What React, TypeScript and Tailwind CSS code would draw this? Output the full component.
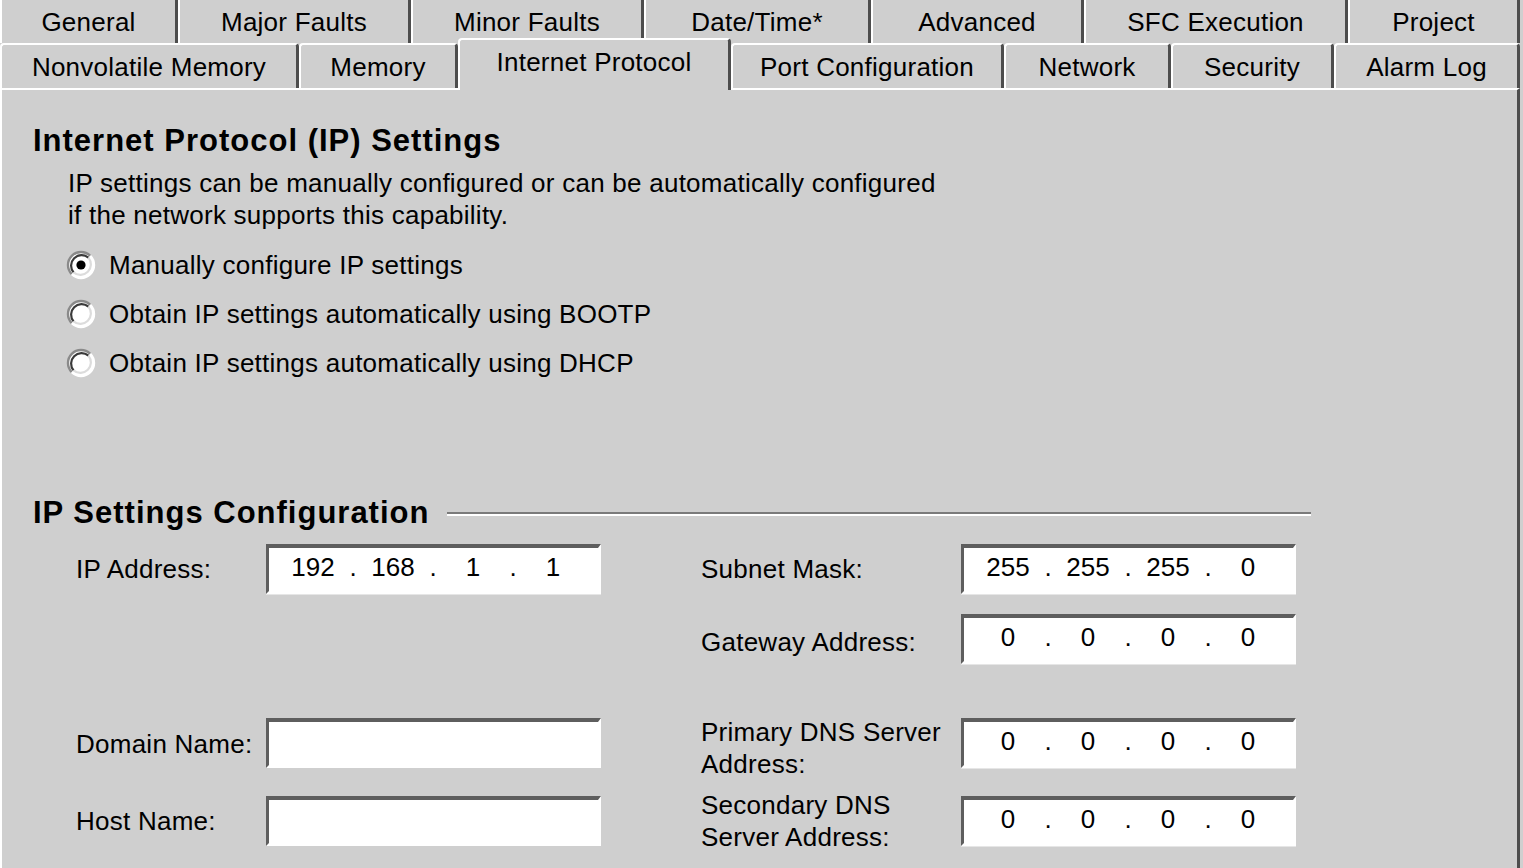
import React from "react";

const row1 = [
  { label: "General", w: "w-[178px]" },
  { label: "Major Faults", w: "w-[233px]" },
  { label: "Minor Faults", w: "w-[233px]" },
  { label: "Date/Time*", w: "w-[227px]" },
  { label: "Advanced", w: "w-[213px]" },
  { label: "SFC Execution", w: "w-[264px]" },
  { label: "Project", w: "w-[172px]" },
];

const row2 = [
  { label: "Nonvolatile Memory", w: "w-[299px]" },
  { label: "Memory", w: "w-[159px]" },
  { label: "Internet Protocol", w: "w-[273px]", sel: true },
  { label: "Port Configuration", w: "w-[273px]" },
  { label: "Network", w: "w-[167px]" },
  { label: "Security", w: "w-[163px]" },
  { label: "Alarm Log", w: "w-[186px]" },
];

function Radio({ checked }: { checked?: boolean }) {
  return (
    <svg width="30" height="30" viewBox="0 0 30 30" className="shrink-0">
      <circle cx="15" cy="15" r="13" fill="#ffffff" />
      <path d="M 5.8 24.2 A 13 13 0 0 1 24.2 5.8" fill="none" stroke="#8a8a8a" strokeWidth="2.4" />
      <path d="M 7.6 22.4 A 10.5 10.5 0 0 1 22.4 7.6" fill="none" stroke="#3a3a3a" strokeWidth="2.2" />
      <path d="M 24.2 5.8 A 13 13 0 0 1 5.8 24.2" fill="none" stroke="#ffffff" strokeWidth="2.4" />
      <path d="M 22.4 7.6 A 10.5 10.5 0 0 1 7.6 22.4" fill="none" stroke="#dcdcdc" strokeWidth="2.2" />
      {checked && <circle cx="15" cy="15" r="4.6" fill="#000000" />}
    </svg>
  );
}

function IpBox({ octets }: { octets: string[] }) {
  return (
    <div className="w-[335px] h-[50px] bg-white border-t-[4px] border-l-[3px] border-b-[3px] border-r-[3px] border-t-[#5e5e5e] border-l-[#5e5e5e] border-b-white border-r-white shadow-[0_1px_0_#e6e6e6] flex items-center pl-[10px] pb-[5px] tracking-normal">
      {octets.map((o, i) => (
        <React.Fragment key={i}>
          {i > 0 && <span className="w-[12px] text-center">.</span>}
          <span className="w-[68px] text-center">{o}</span>
        </React.Fragment>
      ))}
    </div>
  );
}

function TextBox() {
  return (
    <div className="w-[335px] h-[50px] bg-white border-t-[4px] border-l-[3px] border-b-[3px] border-r-[3px] border-t-[#5e5e5e] border-l-[#5e5e5e] border-b-white border-r-white" />
  );
}

export default function App() {
  return (
    <div className="w-[1523px] h-[868px] overflow-hidden bg-[#cfcfcf] text-black text-[26px] leading-[32px] tracking-[0.25px] font-['Liberation_Sans',Arial,sans-serif] flex flex-col">
      {/* Tab row 1 */}
      <div className="flex h-[43px]">
        {row1.map((t) => (
          <div
            key={t.label}
            className={`${t.w} h-[43px] border-l-2 border-l-white border-r-[3px] border-r-[#4d4d4d] flex items-center justify-center`}
          >
            {t.label}
          </div>
        ))}
      </div>
      {/* Tab row 2 */}
      <div className="flex h-[45px] relative z-10">
        {row2.map((t) =>
          t.sel ? (
            <div
              key={t.label}
              className={`${t.w} h-[52px] -mt-[5px] bg-[#cfcfcf] border-l-2 border-l-white border-t-2 border-t-white border-r-[3px] border-r-[#4d4d4d] rounded-tl-[4px] rounded-tr-[4px] flex items-center justify-center pb-[6px]`}
            >
              {t.label}
            </div>
          ) : (
            <div
              key={t.label}
              className={`${t.w} h-[45px] border-l-2 border-l-white border-t-2 border-t-white border-r-[3px] border-r-[#4d4d4d] rounded-tl-[4px] rounded-tr-[4px] flex items-center justify-center pt-[1px]`}
            >
              {t.label}
            </div>
          )
        )}
      </div>
      {/* Panel */}
      <div className="w-[1520px] h-[780px] border-t-2 border-t-white border-l-2 border-l-white border-r-[3px] border-r-[#4d4d4d] pl-[31px] pt-[31px] flex flex-col">
        <div className="font-bold text-[31px] leading-[40px] tracking-[1px]">Internet Protocol (IP) Settings</div>
        <div className="pl-[35px] mt-[6px]">
          <div>IP settings can be manually configured or can be automatically configured</div>
          <div>if the network supports this capability.</div>
        </div>
        <div className="pl-[33px] mt-[9px] flex flex-col">
          <div className="h-[49px] flex items-center gap-[13px]">
            <Radio checked />
            <span>Manually configure IP settings</span>
          </div>
          <div className="h-[49px] flex items-center gap-[13px]">
            <Radio />
            <span>Obtain IP settings automatically using BOOTP</span>
          </div>
          <div className="h-[49px] flex items-center gap-[13px]">
            <Radio />
            <span>Obtain IP settings automatically using DHCP</span>
          </div>
        </div>
        <div className="mt-[106px] flex items-center">
          <div className="font-bold text-[31px] leading-[40px] tracking-[1px]">IP Settings Configuration</div>
          <div className="ml-[18px] w-[864px] flex flex-col mt-[2px]">
            <div className="h-[2px] bg-[#7a7a7a]" />
            <div className="h-[2px] bg-white" />
          </div>
        </div>
        {/* Config rows */}
        <div className="mt-[11px] flex flex-col">
          <div className="flex items-center h-[50px]">
            <div className="w-[233px] pl-[43px]">IP Address:</div>
            <IpBox octets={["192", "168", "1", "1"]} />
            <div className="w-[360px] pl-[100px]">Subnet Mask:</div>
            <IpBox octets={["255", "255", "255", "0"]} />
          </div>
          <div className="flex items-center h-[50px] mt-[20px]">
            <div className="w-[568px]" />
            <div className="w-[360px] pl-[100px] pt-[5px]">Gateway Address:</div>
            <IpBox octets={["0", "0", "0", "0"]} />
          </div>
          <div className="flex items-center h-[50px] mt-[54px]">
            <div className="w-[233px] pl-[43px] pt-[2px]">Domain Name:</div>
            <TextBox />
            <div className="w-[360px] pl-[100px] pt-[10px]">
              <div>Primary DNS Server</div>
              <div>Address:</div>
            </div>
            <IpBox octets={["0", "0", "0", "0"]} />
          </div>
          <div className="flex items-center h-[50px] mt-[28px]">
            <div className="w-[233px] pl-[43px]">Host Name:</div>
            <TextBox />
            <div className="w-[360px] pl-[100px]">
              <div>Secondary DNS</div>
              <div>Server Address:</div>
            </div>
            <IpBox octets={["0", "0", "0", "0"]} />
          </div>
        </div>
      </div>
    </div>
  );
}
